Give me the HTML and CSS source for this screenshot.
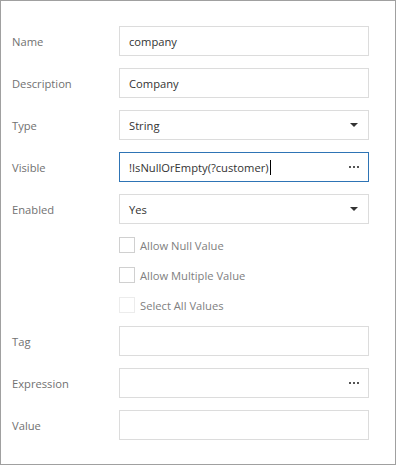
FILE: index.html
```html
<!DOCTYPE html>
<html lang="en">
<head>
    <meta charset="UTF-8">
    <meta name="viewport" content="width=device-width, initial-scale=1.0">
    <title>Parameter Properties</title>
    <link rel="stylesheet" href="styles.css">
</head>
<body>

    <div class="panel">
        <div class="row">
            <label class="caption">Name</label>
            <div class="editor">company</div>
        </div>
        <div class="row">
            <label class="caption">Description</label>
            <div class="editor">Company</div>
        </div>
        <div class="row">
            <label class="caption">Type</label>
            <div class="editor">String<span class="arrow"></span></div>
        </div>
        <div class="row">
            <label class="caption">Visible</label>
            <div class="editor focused">!IsNullOrEmpty(?customer)<span class="caret"></span><span class="dots"><i></i><i></i><i></i></span></div>
        </div>
        <div class="row">
            <label class="caption">Enabled</label>
            <div class="editor">Yes<span class="arrow"></span></div>
        </div>

        <!-- Check boxes -->
        <div class="check-row">
            <span class="box"></span>Allow Null Value
        </div>
        <div class="check-row">
            <span class="box"></span>Allow Multiple Value
        </div>
        <div class="check-row disabled">
            <span class="box"></span>Select All Values
        </div>

        <div class="row">
            <label class="caption">Tag</label>
            <div class="editor"></div>
        </div>
        <div class="row">
            <label class="caption">Expression</label>
            <div class="editor"><span class="dots"><i></i><i></i><i></i></span></div>
        </div>
        <div class="row">
            <label class="caption">Value</label>
            <div class="editor"></div>
        </div>
    </div>

</body>
</html>
```

FILE: styles.css
```css
body {
    margin: 0;
    font-family: "Open Sans", "Noto Sans", sans-serif;
    font-size: 11.2px;
    background: white;
}
.panel {
    box-sizing: border-box;
    width: 396px;
    height: 465px;
    border: 1px solid #a0a0a0;
    padding: 25px 26px 24px 11px;
    display: flex;
    flex-direction: column;
    gap: 12px;
}
.row {
    display: flex;
    align-items: center;
    height: 30px;
}
.caption {
    width: 107px;
    color: #717171;
}
.editor {
    box-sizing: border-box;
    flex: 1;
    height: 30px;
    border: 1px solid #dcdcdc;
    padding: 0 9px;
    display: flex;
    align-items: center;
    color: #333;
}
.editor.focused {
    border-color: #2e74b5;
}
.caret {
    width: 1px;
    height: 15px;
    background: black;
    margin-left: 1px;
}
.arrow {
    margin-left: auto;
    margin-right: 1px;
    border-left: 4px solid transparent;
    border-right: 4px solid transparent;
    border-top: 4px solid #333;
}
.dots {
    margin-left: auto;
    display: flex;
    gap: 2px;
}
.dots i {
    width: 2px;
    height: 2px;
    background: #555;
}
.check-row {
    display: flex;
    align-items: center;
    height: 18px;
    padding-left: 107px;
    color: #808080;
}
.box {
    box-sizing: border-box;
    width: 16px;
    height: 16px;
    border: 1px solid #d0d0d0;
    margin-right: 5px;
}
.check-row.disabled .box {
    border-color: #ececec;
}
```
